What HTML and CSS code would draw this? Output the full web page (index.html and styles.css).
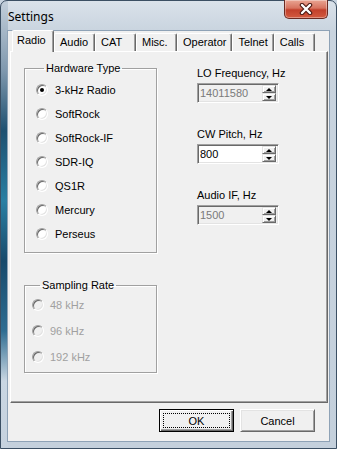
FILE: index.html
```html
<!DOCTYPE html>
<html lang="en">
<head>
    <meta charset="UTF-8">
    <title>Settings</title>
    <link rel="stylesheet" href="styles.css">
</head>
<body>

<div class="window">
    <div class="titlebar">
        <span class="title">Settings</span>
        <button class="close-btn">
            <svg width="14" height="12" viewBox="0 0 14 12">
                <path d="M3 2 L11 10 M11 2 L3 10" stroke="#4a1812" stroke-width="4.5" stroke-linecap="round"/>
                <path d="M3 2 L11 10 M11 2 L3 10" stroke="#ffffff" stroke-width="2.4" stroke-linecap="round"/>
            </svg>
        </button>
    </div>

    <div class="client">
        <div class="tabs">
            <div class="tab active">Radio</div>
            <div class="tab">Audio</div>
            <div class="tab">CAT</div>
            <div class="tab">Misc.</div>
            <div class="tab">Operator</div>
            <div class="tab">Telnet</div>
            <div class="tab">Calls</div>
        </div>

        <div class="panel">
            <div class="left-col">
                <fieldset class="group hardware">
                    <legend>Hardware Type</legend>
                    <div class="radio"><span class="radio-dot checked"></span>3-kHz Radio</div>
                    <div class="radio"><span class="radio-dot"></span>SoftRock</div>
                    <div class="radio"><span class="radio-dot"></span>SoftRock-IF</div>
                    <div class="radio"><span class="radio-dot"></span>SDR-IQ</div>
                    <div class="radio"><span class="radio-dot"></span>QS1R</div>
                    <div class="radio"><span class="radio-dot"></span>Mercury</div>
                    <div class="radio"><span class="radio-dot"></span>Perseus</div>
                </fieldset>

                <fieldset class="group sampling">
                    <legend>Sampling Rate</legend>
                    <div class="radio disabled"><span class="radio-dot"></span>48 kHz</div>
                    <div class="radio disabled"><span class="radio-dot"></span>96 kHz</div>
                    <div class="radio disabled"><span class="radio-dot"></span>192 kHz</div>
                </fieldset>
            </div>

            <div class="right-col">
                <div class="field">
                    <div class="field-label">LO Frequency, Hz</div>
                    <div class="spin disabled">
                        <span class="spin-value">14011580</span>
                        <span class="spin-btns"><span class="spin-up"></span><span class="spin-down"></span></span>
                    </div>
                </div>
                <div class="field">
                    <div class="field-label">CW Pitch, Hz</div>
                    <div class="spin">
                        <span class="spin-value">800</span>
                        <span class="spin-btns"><span class="spin-up"></span><span class="spin-down"></span></span>
                    </div>
                </div>
                <div class="field">
                    <div class="field-label">Audio IF, Hz</div>
                    <div class="spin disabled">
                        <span class="spin-value">1500</span>
                        <span class="spin-btns"><span class="spin-up"></span><span class="spin-down"></span></span>
                    </div>
                </div>
            </div>
        </div>

        <div class="footer">
            <button class="btn default">OK</button>
            <button class="btn">Cancel</button>
        </div>
    </div>
</div>

</body>
</html>
```

FILE: styles.css
```css
body {
    margin: 0;
    background-color: #c8d4e0;
    font-family: "Liberation Sans", Arial, sans-serif;
    font-size: 11px;
    color: #000;
}

/* window frame */
.window {
    width: 337px;
    height: 449px;
    box-sizing: border-box;
    display: flex;
    flex-direction: column;
    padding: 0 7px 7px 7px;
    border: 1px solid #3b4f63;
    border-radius: 7px 7px 0 0;
    background:
        linear-gradient(to bottom, #c3cfdb 0, #7e97ad 70px, #1e5070 130px, #2a7fa3 200px, #184a6b 260px, #2e6d92 330px, #c9d6e2 380px, #c6d2de 449px) left top / 7px 100% no-repeat,
        linear-gradient(to bottom, #dae2ea 0, #c9d4df 30px, #c4d0dc 100%);
}

.titlebar {
    height: 30px;
    display: flex;
    justify-content: space-between;
    align-items: flex-start;
}

.title {
    font-family: "Noto Sans", "Open Sans", sans-serif;
    font-size: 12px;
    margin-top: 7px;
    color: #000;
}

.close-btn {
    width: 44px;
    height: 19px;
    margin-top: -1px;
    margin-right: 1px;
    padding: 0;
    display: flex;
    align-items: center;
    justify-content: center;
    border: 1px solid #6a2a22;
    border-top: none;
    border-radius: 0 0 5px 5px;
    background: linear-gradient(to bottom, #e9a593 0, #d7735f 45%, #c2402b 55%, #d35a3f 100%);
    box-shadow: inset 0 0 0 1px rgba(255,255,255,0.35);
}

.client {
    flex: 1;
    display: flex;
    flex-direction: column;
    padding: 0 1px 0 2px;
    background-color: #f0f0f0;
    box-shadow: 0 0 0 1px #8ea2b6;
}

/* tabs */
.tabs {
    height: 20px;
    display: flex;
    align-items: flex-end;
    padding-left: 2px;
    position: relative;
    z-index: 1;
}

.tab {
    height: 18px;
    box-sizing: border-box;
    padding: 2px 5px 0 5px;
    min-width: 41px;
    border-top: 1px solid #fff;
    border-left: 1px solid #fff;
    border-right: 1px solid #696969;
    border-radius: 2px 2px 0 0;
    box-shadow: inset -1px 0 0 #a0a0a0;
    background-color: #f0f0f0;
    white-space: nowrap;
}

.tab.active {
    height: 22px;
    margin-bottom: -1px;
    padding: 3px 6px 0 4px;
    min-width: 42px;
}

.panel {
    flex: 1;
    display: flex;
    border-top: 1px solid #fff;
    border-left: 1px solid #fff;
    border-right: 1px solid #696969;
    border-bottom: 1px solid #696969;
    box-shadow: inset -1px -1px 0 #a0a0a0;
}

/* group boxes */
.left-col {
    margin-left: 13px;
    width: 133px;
}

.group {
    margin: 0;
    border: 1px solid #a0a0a0;
    box-shadow: inset 1px 1px 0 #fff, 1px 1px 0 #fff;
    padding: 3px 0 6px 11px;
}

.group legend {
    padding: 0 2px;
    margin-left: 8px;
    line-height: 13px;
}

.hardware {
    margin-top: 10px;
}

.sampling {
    margin-top: 26px;
    padding: 0 0 2px 7px;
}

.radio {
    height: 24px;
    display: flex;
    align-items: center;
}

.sampling .radio {
    height: 26px;
}

.radio-dot {
    width: 12px;
    height: 12px;
    box-sizing: border-box;
    border-radius: 50%;
    margin-right: 7px;
    border: 1px solid;
    border-color: #a0a0a0 #fff #fff #a0a0a0;
    box-shadow: inset 1px 1px 0 #696969, inset -1px -1px 0 #e3e3e3;
    background-color: #fff;
    position: relative;
}

.sampling .radio-dot {
    margin-right: 6px;
}

.radio-dot.checked::after {
    content: "";
    position: absolute;
    left: 3px;
    top: 3px;
    width: 4px;
    height: 4px;
    border-radius: 50%;
    background-color: #000;
}

.radio.disabled {
    color: #a0a0a0;
}

.radio.disabled .radio-dot {
    background-color: #f0f0f0;
}

/* spin boxes */
.right-col {
    margin-left: 40px;
    padding-top: 15px;
}

.field {
    margin-bottom: 25px;
}

.field-label {
    line-height: 13px;
    margin-bottom: 3px;
    white-space: nowrap;
}

.spin {
    width: 82px;
    height: 20px;
    box-sizing: border-box;
    display: flex;
    justify-content: space-between;
    align-items: center;
    padding: 2px;
    border: 1px solid;
    border-color: #a0a0a0 #fff #fff #a0a0a0;
    box-shadow: inset 1px 1px 0 #696969, inset -1px -1px 0 #e3e3e3;
    background-color: #fff;
}

.spin.disabled {
    background-color: #f0f0f0;
    color: #7a7a7a;
}

.spin-btns {
    width: 14px;
    height: 16px;
    display: flex;
    flex-direction: column;
}

.spin-up, .spin-down {
    flex: 1;
    display: flex;
    align-items: center;
    justify-content: center;
    background-color: #f0f0f0;
    border: 1px solid;
    border-color: #e3e3e3 #696969 #696969 #e3e3e3;
    box-shadow: inset 1px 1px 0 #fff, inset -1px -1px 0 #a0a0a0;
}

.spin-up::before {
    content: "";
    border-left: 3px solid transparent;
    border-right: 3px solid transparent;
    border-bottom: 3px solid #000;
}

.spin-down::before {
    content: "";
    border-left: 3px solid transparent;
    border-right: 3px solid transparent;
    border-top: 3px solid #000;
}

/* dialog buttons */
.footer {
    height: 38px;
    box-sizing: border-box;
    display: flex;
    justify-content: flex-end;
    gap: 6px;
    padding: 6px 13px 9px 0;
}

.btn {
    width: 75px;
    height: 23px;
    padding: 0;
    font-family: "Liberation Sans", Arial, sans-serif;
    font-size: 11px;
    color: #000;
    background-color: #f0f0f0;
    border: 1px solid;
    border-color: #fff #696969 #696969 #fff;
    box-shadow: inset 1px 1px 0 #e3e3e3, inset -1px -1px 0 #a0a0a0;
    position: relative;
}

.btn.default {
    border-color: #000;
    box-shadow: inset 1px 1px 0 #fff, inset -1px -1px 0 #696969, inset -2px -2px 0 #a0a0a0;
}

.btn.default::after {
    content: "";
    position: absolute;
    left: 3px;
    top: 3px;
    right: 3px;
    bottom: 3px;
    border: 1px dotted #000;
}
```
